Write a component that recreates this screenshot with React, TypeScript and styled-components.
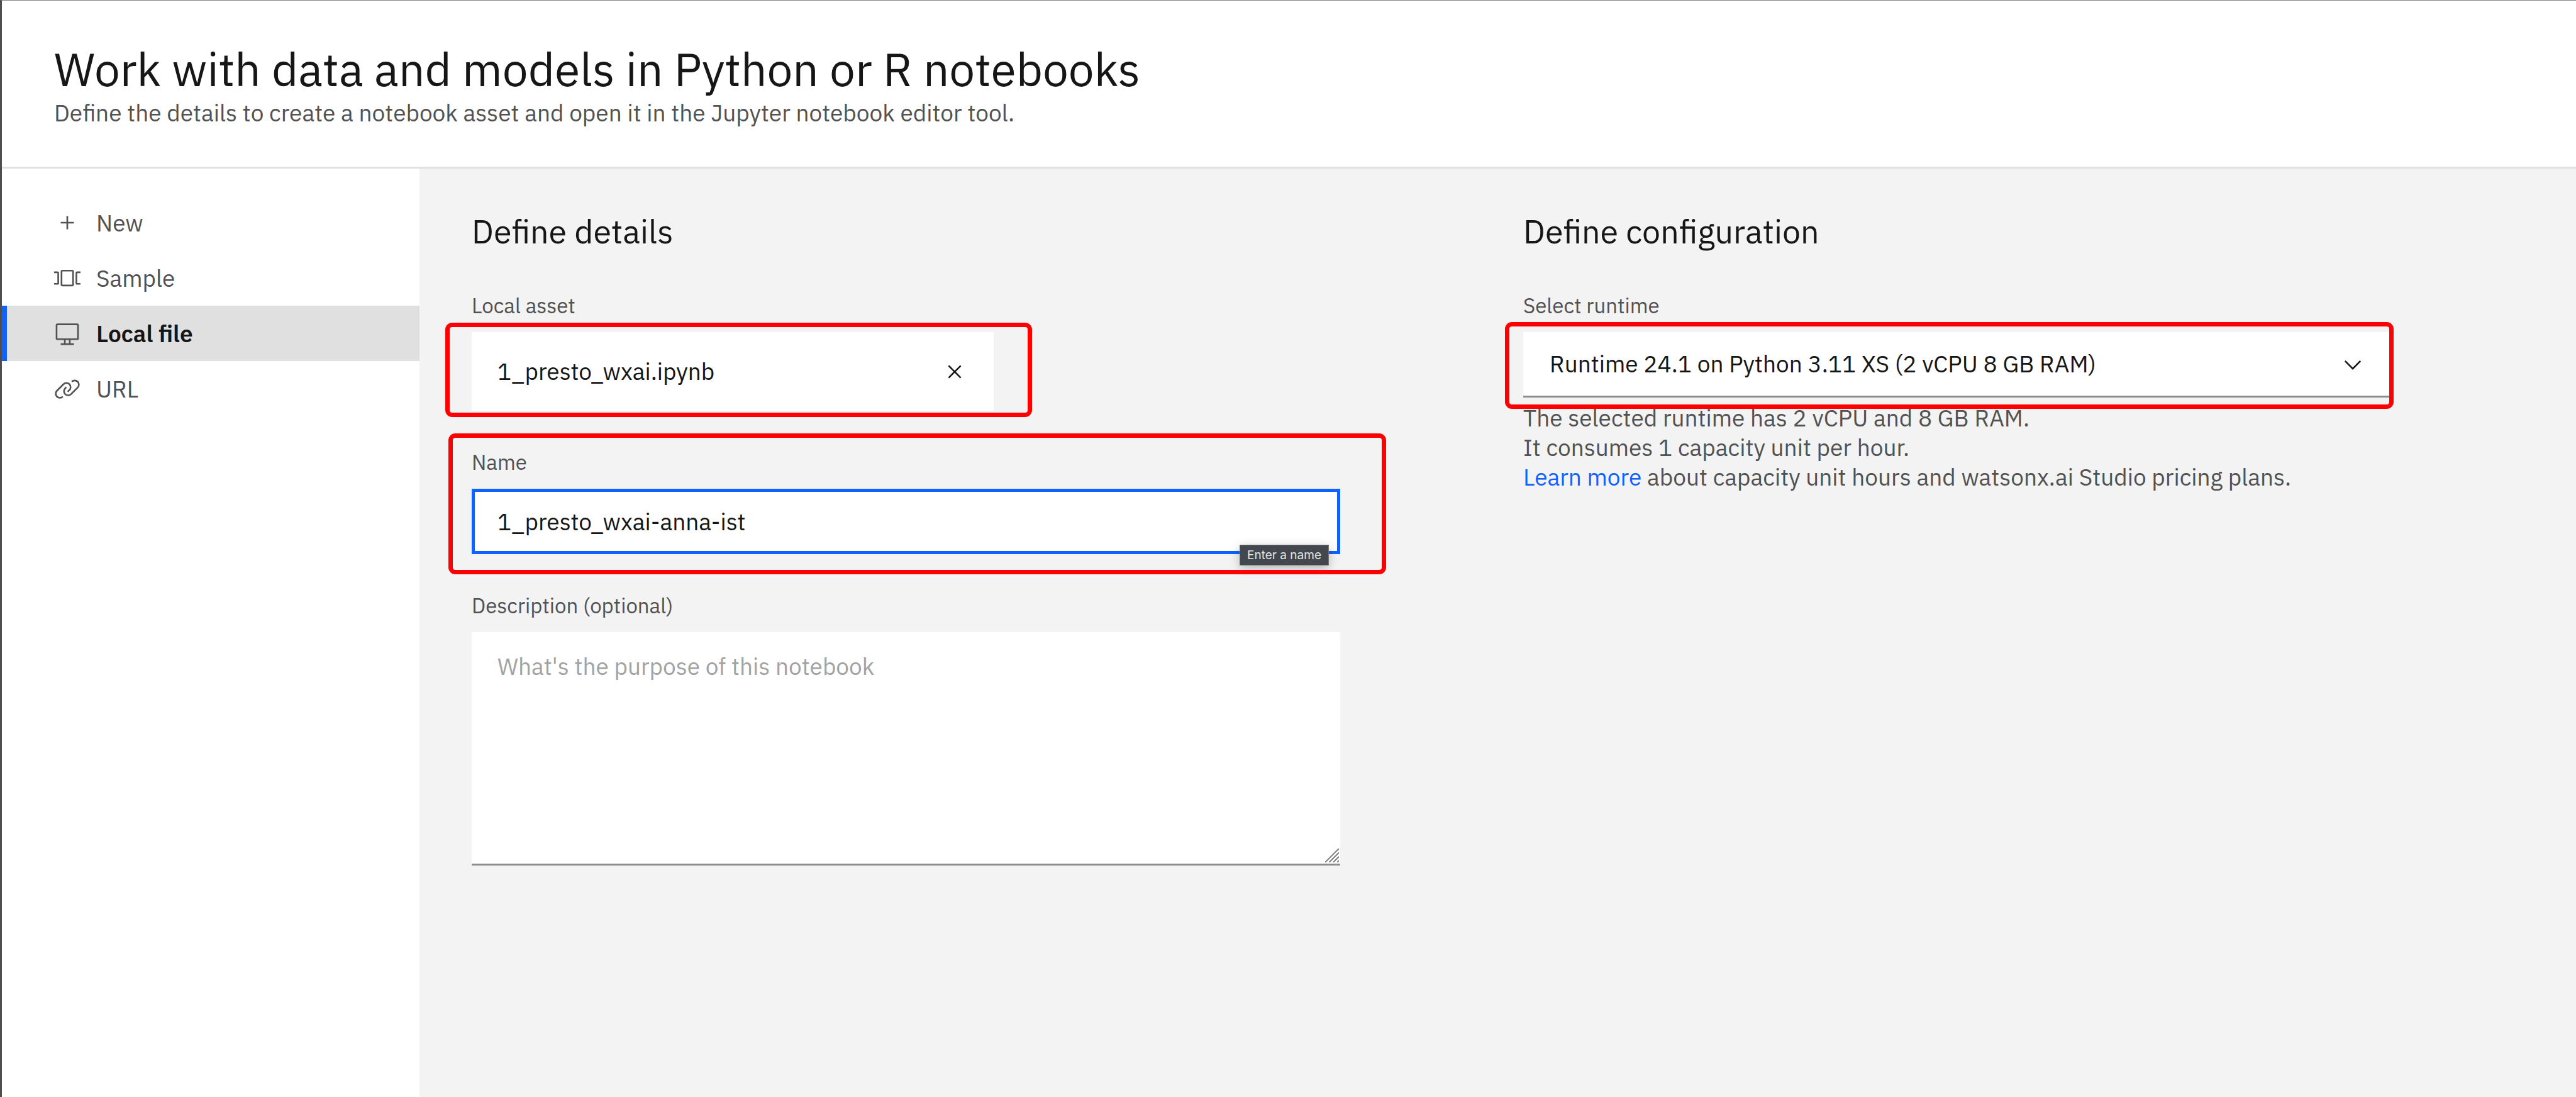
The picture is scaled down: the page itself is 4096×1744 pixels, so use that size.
import React, { useState } from 'react';
import styled, { createGlobalStyle, css } from 'styled-components';

const color = {
  text: '#161616',
  textMuted: '#525252',
  placeholder: '#a2a2a2',
  page: '#f3f3f3',
  surface: '#ffffff',
  border: '#e0e0e0',
  borderStrong: '#8d8d8d',
  accent: '#0f62fe',
  highlight: '#ff0000',
};

const bodyText = css`
  font-size: 37px;
  line-height: 47px;
`;

const GlobalStyle = createGlobalStyle`
  *, *::before, *::after { box-sizing: border-box; }
  body {
    margin: 0;
    background: ${color.page};
    color: ${color.text};
    font-family: "IBM Plex Sans", Roboto, "Noto Sans", sans-serif;
  }
  button, input, select, textarea { font-family: inherit; color: inherit; }
  h1, h2, p, ul { margin: 0; padding: 0; font-weight: 400; }
`;

const Shell = styled.div`
  display: flex;
  flex-direction: column;
  min-height: 100vh;
  border-top: 1px solid #858585;
  border-left: 3px solid #4d4d4f;
`;

const Header = styled.header`
  padding: 62px 83px;
  background: ${color.surface};
  border-bottom: 3px solid ${color.border};
`;

const Title = styled.h1`
  font-size: 73px;
  line-height: 93px;
`;

const Subtitle = styled.p`
  ${bodyText}
  color: ${color.textMuted};
`;

const Body = styled.div`
  display: flex;
  flex: 1;
`;

const Sidebar = styled.nav`
  flex: 0 0 664px;
  padding-top: 42px;
  background: ${color.surface};
`;

const NavList = styled.ul`
  list-style: none;
`;

const NavButton = styled.button<{ $active: boolean }>`
  ${bodyText}
  display: flex;
  align-items: center;
  gap: 25px;
  width: 100%;
  height: 88px;
  padding: 0 75px;
  border: 0;
  border-left: 8px solid ${(p) => (p.$active ? color.accent : 'transparent')};
  background: ${(p) => (p.$active ? color.border : 'transparent')};
  color: ${(p) => (p.$active ? color.text : color.textMuted)};
  font-weight: ${(p) => (p.$active ? 600 : 400)};
  text-align: left;
  cursor: pointer;

  svg { color: ${color.textMuted}; }
`;

const Icon = styled.svg.attrs({ viewBox: '0 0 32 32', 'aria-hidden': true })`
  flex: none;
  width: 42px;
  height: 42px;
  fill: currentColor;
`;

const Main = styled.main`
  flex: 1;
  display: grid;
  grid-template-columns: 1fr 1fr;
  align-items: start;
  column-gap: 291px;
  padding: 63px 293px 63px 83px;
`;

const Column = styled.section`
  display: flex;
  flex-direction: column;
  gap: 61px;
`;

const SectionTitle = styled.h2`
  font-size: 52px;
  line-height: 73px;
`;

const Field = styled.div`
  position: relative;
  display: flex;
  flex-direction: column;
  gap: 21px;
`;

const Label = styled.label`
  font-size: 33px;
  line-height: 42px;
  color: ${color.textMuted};
`;

const Control = styled.div`
  position: relative;
  display: flex;
`;

const Highlight = styled.span<{ $inset: string }>`
  position: absolute;
  inset: ${(p) => p.$inset};
  border: 7px solid ${color.highlight};
  border-radius: 11px;
  pointer-events: none;
`;

const FileTile = styled.div`
  ${bodyText}
  position: relative;
  display: flex;
  align-items: center;
  justify-content: space-between;
  width: 830px;
  height: 125px;
  padding: 0 41px;
  background: ${color.surface};
`;

const ClearButton = styled.button`
  display: flex;
  padding: 0;
  border: 0;
  background: none;
  cursor: pointer;
`;

const TextInput = styled.input`
  ${bodyText}
  width: 100%;
  height: 104px;
  padding: 0 36px;
  border: 5px solid ${color.accent};
  border-radius: 0;
  outline: 0;
  background: ${color.surface};
`;

const Tooltip = styled.span`
  position: absolute;
  top: 89px;
  right: 18px;
  padding: 0 11px;
  border: 1px solid #73777a;
  background: #42484d;
  box-shadow: 0 4px 16px rgba(0, 0, 0, 0.25);
  color: #e4e6e6;
  font-family: Inter, "Liberation Sans", sans-serif;
  font-size: 19px;
  line-height: 31px;
  white-space: nowrap;
`;

const TextArea = styled.textarea`
  ${bodyText}
  display: block;
  width: 100%;
  height: 371px;
  padding: 31px 41px;
  border: 0;
  border-bottom: 3px solid ${color.borderStrong};
  border-radius: 0;
  outline: 0;
  resize: none;
  background: ${color.surface};

  &::placeholder { color: ${color.placeholder}; opacity: 1; }
`;

const Grip = styled.svg`
  position: absolute;
  right: 2px;
  bottom: 5px;
  width: 22px;
  height: 22px;
  stroke: #757575;
  stroke-width: 2;
  pointer-events: none;
`;

const Select = styled.select`
  ${bodyText}
  width: 100%;
  height: 104px;
  padding: 0 104px 0 42px;
  border: 0;
  border-bottom: 3px solid ${color.borderStrong};
  border-radius: 0;
  outline: 0;
  appearance: none;
  background: ${color.surface};
`;

const Chevron = styled(Icon)`
  position: absolute;
  top: 31px;
  right: 41px;
  pointer-events: none;
`;

const RuntimeField = styled.div`
  display: flex;
  flex-direction: column;
  gap: 9px;
`;

const Helper = styled.p`
  ${bodyText}
  color: ${color.textMuted};
`;

const Link = styled.a`
  color: ${color.accent};
  text-decoration: none;
`;

const navItems = [
  {
    label: 'New',
    paths: ['M17 15V8h-2v7H8v2h7v7h2v-7h7v-2z'],
  },
  {
    label: 'Sample',
    paths: [
      'M22 26H10a2 2 0 0 1-2-2V8a2 2 0 0 1 2-2h12a2 2 0 0 1 2 2v16a2 2 0 0 1-2 2zM10 8v16h12V8z',
      'M4 24H0v-2h4V10H0V8h4a2 2 0 0 1 2 2v12a2 2 0 0 1-2 2z',
      'M32 24h-4a2 2 0 0 1-2-2V10a2 2 0 0 1 2-2h4v2h-4v12h4z',
    ],
  },
  {
    label: 'Local file',
    paths: [
      'M28 4H4a2 2 0 0 0-2 2v16a2 2 0 0 0 2 2h8v4H8v2h16v-2h-4v-4h8a2 2 0 0 0 2-2V6a2 2 0 0 0-2-2zM18 28h-4v-4h4zM28 22H4V6h24z',
    ],
  },
  {
    label: 'URL',
    paths: [
      'M29.25 6.76a6 6 0 0 0-8.5 0l1.42 1.42a4 4 0 1 1 5.67 5.67l-8 8a4 4 0 1 1-5.67-5.66l1.41-1.42-1.41-1.42-1.42 1.42a6 6 0 0 0 0 8.5A6 6 0 0 0 17 25a6 6 0 0 0 4.27-1.76l8-8a6 6 0 0 0-.02-8.48z',
      'M4.19 24.82a4 4 0 0 1 0-5.67l8-8a4 4 0 0 1 5.67 0A3.94 3.94 0 0 1 19 14a4 4 0 0 1-1.17 2.85L15.71 19l1.42 1.42 2.12-2.12a6 6 0 0 0-8.51-8.51l-8 8a6 6 0 0 0 0 8.51A6 6 0 0 0 7 28a6.07 6.07 0 0 0 4.28-1.76l-1.42-1.42a4 4 0 0 1-5.67 0z',
    ],
  },
];

export default function App() {
  const [source, setSource] = useState('Local file');
  const [name, setName] = useState('1_presto_wxai-anna-ist');

  return (
    <>
      <GlobalStyle />
      <Shell>
        <Header>
          <Title>Work with data and models in Python or R notebooks</Title>
          <Subtitle>
            Define the details to create a notebook asset and open it in the Jupyter notebook editor tool.
          </Subtitle>
        </Header>
        <Body>
          <Sidebar aria-label="Notebook source">
            <NavList>
              {navItems.map((item) => (
                <li key={item.label}>
                  <NavButton
                    type="button"
                    $active={item.label === source}
                    aria-current={item.label === source ? 'page' : undefined}
                    onClick={() => setSource(item.label)}
                  >
                    <Icon>
                      {item.paths.map((d) => (
                        <path key={d} d={d} />
                      ))}
                    </Icon>
                    {item.label}
                  </NavButton>
                </li>
              ))}
            </NavList>
          </Sidebar>
          <Main>
            <Column>
              <SectionTitle>Define details</SectionTitle>
              <Field role="group" aria-labelledby="asset-label">
                <Label as="span" id="asset-label">Local asset</Label>
                <FileTile>
                  <span>1_presto_wxai.ipynb</span>
                  <ClearButton type="button" aria-label="Remove file">
                    <Icon>
                      <path d="M24 9.4 22.6 8 16 14.6 9.4 8 8 9.4l6.6 6.6L8 22.6 9.4 24l6.6-6.6 6.6 6.6 1.4-1.4-6.6-6.6z" />
                    </Icon>
                  </ClearButton>
                  <Highlight $inset="-15px -61px -10px -42px" />
                </FileTile>
              </Field>
              <Field>
                <Label htmlFor="name">Name</Label>
                <Control>
                  <TextInput id="name" value={name} onChange={(e) => setName(e.target.value)} />
                  <Tooltip role="tooltip">Enter a name</Tooltip>
                </Control>
                <Highlight $inset="-25px -73px -32px -37px" />
              </Field>
              <Field>
                <Label htmlFor="description">Description (optional)</Label>
                <Control>
                  <TextArea id="description" placeholder="What's the purpose of this notebook" />
                  <Grip viewBox="0 0 24 24" aria-hidden="true">
                    <path d="M0 24 24 0M7 24 24 7M14 24 24 14M21 24 24 21" />
                  </Grip>
                </Control>
              </Field>
            </Column>
            <Column>
              <SectionTitle>Define configuration</SectionTitle>
              <RuntimeField>
                <Field>
                  <Label htmlFor="runtime">Select runtime</Label>
                  <Control>
                    <Select id="runtime">
                      <option>Runtime 24.1 on Python 3.11 XS (2 vCPU 8 GB RAM)</option>
                    </Select>
                    <Chevron>
                      <path d="M16 22 6 12l1.4-1.4 8.6 8.6 8.6-8.6L26 12z" />
                    </Chevron>
                    <Highlight $inset="-16px -3px -18px -29px" />
                  </Control>
                </Field>
                <Helper>
                  The selected runtime has 2 vCPU and 8 GB RAM.
                  <br />
                  It consumes 1 capacity unit per hour.
                  <br />
                  <Link href="#pricing">Learn more</Link> about capacity unit hours and watsonx.ai Studio pricing
                  plans.
                </Helper>
              </RuntimeField>
            </Column>
          </Main>
        </Body>
      </Shell>
    </>
  );
}
